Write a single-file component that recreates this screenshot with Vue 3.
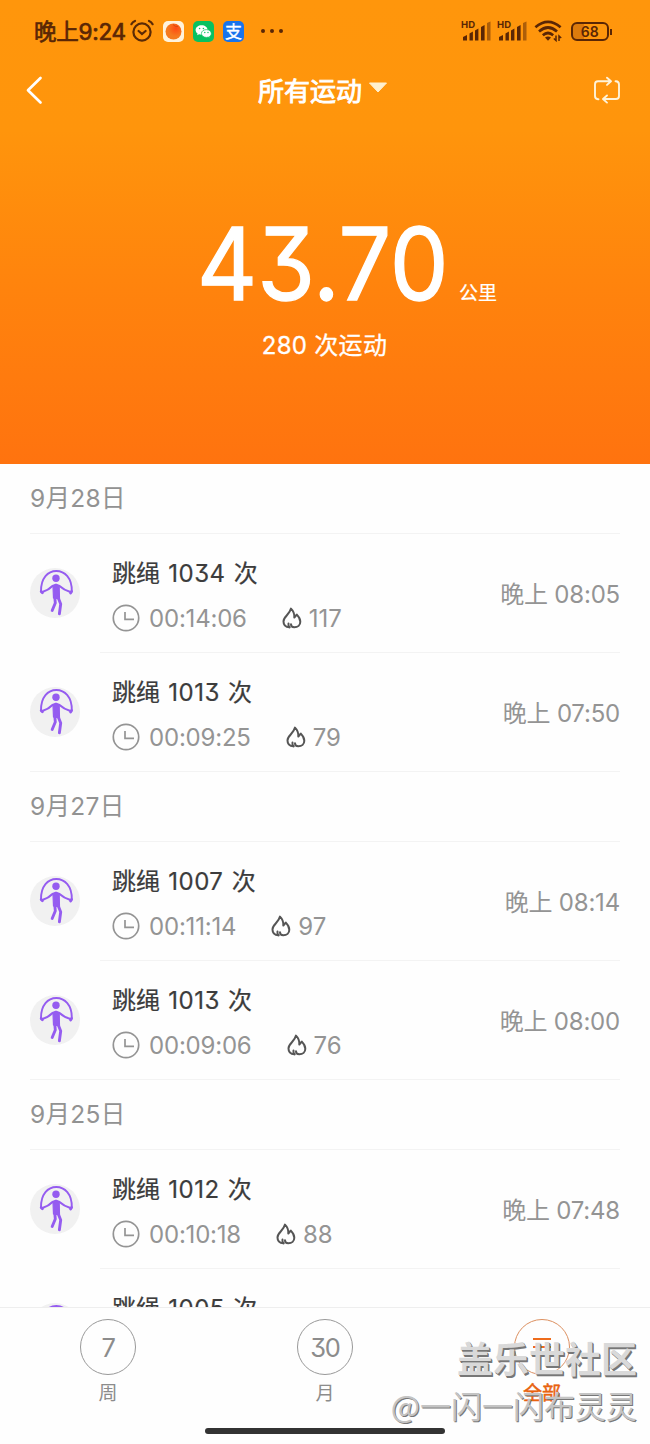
<script setup>
const groups = [
  { date: '9月28日', rows: [
    { n: 1034, t: '00:14:06', c: 117, at: '08:05' },
    { n: 1013, t: '00:09:25', c: 79, at: '07:50' } ] },
  { date: '9月27日', rows: [
    { n: 1007, t: '00:11:14', c: 97, at: '08:14' },
    { n: 1013, t: '00:09:06', c: 76, at: '08:00' } ] },
  { date: '9月25日', rows: [
    { n: 1012, t: '00:10:18', c: 88, at: '07:48' },
    { n: 1005 } ] },
]
</script>

<template>
  <div class="screen">
    <header class="hero">
      <div class="status">
        <span class="clock">晚上9:24</span>
        <svg class="alarm" width="24" height="24" viewBox="0 0 24 24" fill="none" stroke="#5a2a06" stroke-width="2.2" stroke-linecap="round">
          <circle cx="12" cy="13" r="8.6" /><path d="M8.6 12l3.4 3 3.6-3M1.4 5.2Q2.6 3 5 2M22.6 5.2Q21.4 3 19 2" />
        </svg>
        <svg class="app" width="21" height="21" viewBox="0 0 21 21">
          <defs><radialGradient id="ball" cx=".65" cy=".3"><stop offset="0" stop-color="#ff4a12" /><stop offset="1" stop-color="#f57a1e" /></radialGradient></defs>
          <rect width="21" height="21" rx="5" fill="#fff3dc" /><circle cx="10.5" cy="10.5" r="8" fill="url(#ball)" /><path d="M10 3.5q2 2.6 5 2" fill="none" stroke="#d9480c" />
        </svg>
        <svg class="app" width="21" height="21" viewBox="0 0 21 21">
          <rect width="21" height="21" rx="5" fill="#08c160" />
          <path d="M8.6 4.2c-3.400 0-6 2.100-6 4.800 0 1.500.8 2.800 2 3.600l-.5 1.700 2-1c.8.2 1.600.4 2.500.4 3.400 0 6-2 6-4.700s-2.600-4.800-6-4.800z" fill="#fff" />
          <path d="M13.400 8.600c-2.800 0-5 1.700-5 3.900s2.200 3.900 5 3.900c.7 0 1.300-.1 1.900-.3l1.600.8-.4-1.400c1.100-.7 1.800-1.800 1.800-3 0-2.200-2.100-3.900-4.900-3.900z" fill="#fff" stroke="#08c160" stroke-width=".7" />
          <g fill="#08c160"><circle cx="6.600" cy="7.500" r=".8" /><circle cx="10.400" cy="7.500" r=".8" /><circle cx="11.800" cy="11.500" r=".7" /><circle cx="15" cy="11.500" r=".7" /></g>
        </svg>
        <span class="app pay">支</span>
        <span class="dots"><i /><i /><i /></span>
        <span class="grow" />
        <svg v-for="k in 2" :key="k" class="signal" width="31" height="22" viewBox="0 0 31 22">
          <text x="0" y="8" class="hd" textLength="14">HD</text>
          <g fill="#5a2605"><path d="M2 17l4-2v5.500H2zM8.500 13.500l3.400-2v9H8.500zM14 10.500l3.400-2v12H14zM20 7l3.600-2v15.500H20z" /><path d="M26 3l3.500-1.500v19H26z" opacity=".5" /></g>
        </svg>
        <svg class="wifi" width="29" height="22" viewBox="0 0 29 22" fill="none" stroke="#5a2605" stroke-width="2.700">
          <path d="M1.400 7.200Q14 -3.600 26.600 7.200M5 11.400Q14 3.600 23 11.400M8.800 15.200Q14 10.800 19.200 15.200" />
          <path d="M11 17.600Q14 15.400 17 17.600L14 20.800z" fill="#5a2605" stroke="none" />
          <path d="M22 15.500v5l-2.200-2M25 21v-5l2.200 2" stroke-width="1.500" />
        </svg>
        <span class="battery"><span>68</span></span>
      </div>
      <nav class="nav">
        <svg width="18" height="30" viewBox="0 0 18 30" fill="none" stroke="#fff" stroke-width="2.700" stroke-linecap="round" stroke-linejoin="round"><path d="M15.500 3L3 15.300 15.500 27.500" /></svg>
        <div class="title"><span>所有运动</span><svg width="20" height="12" viewBox="0 0 20 12"><path d="M1.500 1h17L10 10z" fill="#fff0cf" stroke="#fff0cf" stroke-linejoin="round" /></svg></div>
        <svg width="28" height="28" viewBox="0 0 28 28" fill="none" stroke="#fff3d8" stroke-width="1.900" stroke-linecap="round" stroke-linejoin="round">
          <path d="M5.500 23.200H5Q2 23 2 20V8.500Q2 5.300 5 5.300H17.500M14 1.700l4 3.600-4 3.600M22.500 5.300H23Q26 5.500 26 8.500V20Q26 23 23 23H10.500M14 19.500L10 23l4 3.600" />
        </svg>
      </nav>
      <div class="total"><span class="num">43.70</span><span class="unit">公里</span></div>
      <div class="count">280 次运动</div>
    </header>

    <main class="list">
      <section v-for="g in groups" :key="g.date">
        <h2 class="date">{{ g.date }}</h2>
        <article v-for="r in g.rows" :key="r.n + (r.t || '')" class="row">
          <span class="avatar">
            <svg width="50" height="50" viewBox="0 0 50 50" fill="none" stroke="#955cf0" stroke-linecap="round" stroke-linejoin="round">
              <path d="M11 23.500C10.800 10 18 3 26.300 3S42.200 10 41.800 23.500" stroke-width="1.900" />
              <path d="M11.200 23.500l1.200 1.200M41.500 23.500l-.9 1.500" stroke-width="2.800" />
              <circle cx="26" cy="10.300" r="3.700" fill="#955cf0" stroke="none" />
              <path d="M13 23.800Q18.500 22 22.500 18L26 16.700 29.500 18Q34 22 39.800 23.800" stroke-width="2.200" />
              <path d="M23 18.500Q26 15.500 29.200 18.500L29.500 31 23.500 30z" fill="#955cf0" stroke-width="1.200" />
              <path d="M24.800 29L25.300 35 22.200 42.500M28.300 30L30.700 36 29.400 45.700" stroke-width="2.900" />
            </svg>
          </span>
          <div class="body">
            <div class="name">跳绳 <span>{{ r.n }}</span> 次</div>
            <div v-if="r.t" class="meta">
              <svg width="28" height="28" viewBox="0 0 28 28" fill="none" stroke="#949494" stroke-width="1.700"><circle cx="14" cy="14" r="12.700" /><path d="M13 8v7.300h9" /></svg>
              <span class="dur">{{ r.t }}</span>
              <svg class="flame" width="20" height="22" viewBox="0 0 20 22" fill="none" stroke="#555" stroke-width="2" stroke-linecap="round" stroke-linejoin="round">
                <path d="M7.500 20.300C3.700 20 1.500 17.600 1.500 14.400 1.500 9.500 7.500 8 9 1.600 11.500 4 12.600 6.800 12.300 10.500L14.800 7.600C17 9.800 18.300 12.200 18.300 14.800 18.300 18.200 15.800 20.300 12.300 20.300 9.800 20.300 9 19 9 17.300" />
                <path d="M7.500 20.300Q6 18.500 6.500 16.500" />
              </svg>
              <span class="cal">{{ r.c }}</span>
            </div>
            <div v-else class="meta" />
          </div>
          <time v-if="r.at" class="at">晚上 {{ r.at }}</time>
        </article>
      </section>
    </main>

    <footer class="tabs">
      <div class="tab"><b>7</b><span>周</span></div>
      <div class="tab"><b>30</b><span>月</span></div>
      <div class="tab on"><b><svg width="20" height="24" viewBox="0 0 20 24" stroke="#ee6c1c" stroke-width="2.200"><path d="M1 3h18M1 11h18M1 19h18" /></svg></b><span>全部</span></div>
    </footer>
    <div class="home" />
    <div class="mark"><div class="m1">盖乐世社区</div><div class="m2">@一闪一闪布灵灵</div></div>
  </div>
</template>

<style>
html, body { margin: 0; background: #fff; overflow: hidden; }
</style>

<style scoped>
.screen { position: relative; width: 650px; height: 1444px; overflow: hidden; display: flex; flex-direction: column; background: #fefefe; font-family: Inter, "Noto Sans CJK SC", sans-serif; font-feature-settings: "cv09"; }
.hero { flex: none; height: 463.500px; background: linear-gradient(#ff960c 0, #ff950c 130px, #ff830d 290px, #ff730f 463px); color: #fff; }
.status { display: flex; align-items: center; height: 62px; padding: 0 41px 0 34px; box-sizing: border-box; color: #5a2605; }
.clock { width: 91px; font-size: 22.500px; line-height: 30px; padding-top: 1px; font-weight: 400; -webkit-text-stroke: .7px #5a2605; letter-spacing: -.25px; white-space: nowrap; }
.alarm { margin: 0 9px 0 5px; }
.app { width: 21px; height: 21px; margin-right: 9px; flex: none; }
.pay { border-radius: 5px; background: #1874ec; color: #fff; font: 400 17px/20px "Noto Sans CJK SC", sans-serif; -webkit-text-stroke: .3px #fff; text-align: center; }
.dots { display: flex; gap: 5.500px; margin-left: 8px; }
.dots i { width: 3.500px; height: 3.500px; border-radius: 2px; background: #5a2605; }
.grow { flex: 1; }
.signal { margin-right: 5.500px; }
.hd { font: 700 9.500px Inter, sans-serif; fill: #5a2605; }
.wifi { margin: 0 8px 0 0; }
.battery { position: relative; box-sizing: border-box; width: 38.500px; height: 19px; border: 2px solid #5a2605; border-radius: 6px; background: linear-gradient(90deg, #dc7b0d 11px, transparent 11px); font-size: 14px; line-height: 15px; font-weight: 600; text-align: center; }
.battery::after { content: ""; position: absolute; right: -5px; top: 5px; width: 2px; height: 6px; background: #5a2605; }
.nav { display: flex; align-items: center; justify-content: space-between; height: 56px; padding: 0 29px 0 25px; }
.title { display: flex; align-items: center; gap: 6px; margin: 4px 0 0 10px; font-size: 26px; line-height: 36px; font-weight: 400; -webkit-text-stroke: .9px #fff; }
.title svg { margin-top: -8px; }
.total { display: flex; align-items: flex-end; justify-content: flex-start; height: 112px; margin: 90px 0 0 197px; }
.num { width: 251px; font-size: 100.500px; line-height: 112px; font-weight: 400; -webkit-text-stroke: 1.300px #fff; transform: scaleX(.928); transform-origin: 0 50%; white-space: nowrap; }
.unit { margin-left: 11px; font-size: 19px; line-height: 26px; margin-bottom: 13px; font-weight: 400; -webkit-text-stroke: .2px #fff; }
.count { margin: 8px 1px 0 0; text-align: center; font-size: 24px; line-height: 36px; letter-spacing: .3px; -webkit-text-stroke: .3px #fff; }
.list { flex: 1; overflow: hidden; }
.date { margin: 0 30px; height: 70.500px; box-sizing: border-box; border-bottom: 1px solid #f3f3f3; font-size: 24.500px; line-height: 69px; font-weight: 400; color: #929292; letter-spacing: .3px; }
.row { display: flex; align-items: center; position: relative; height: 118.750px; margin: 0 30px; }
.row::after { content: ""; position: absolute; left: 70px; right: 0; bottom: 0; height: 1px; background: #f3f3f3; }
.row:last-child::after { left: 0; }
.avatar { width: 50px; height: 50px; border-radius: 50%; background: #f1f1f1; }
.body { flex: 1; margin-left: 32px; padding-top: 5px; }
.name { font-size: 24px; line-height: 36px; color: #3c3c3c; margin-bottom: 9px; white-space: nowrap; word-spacing: 1.500px; -webkit-text-stroke: .2px #3c3c3c; }
.name span { letter-spacing: .5px; }
.meta { display: flex; align-items: center; height: 34px; color: #949494; font-size: 24px; }
.dur { margin: 0 35px 0 9px; letter-spacing: -.2px; }
.flame { margin-right: 7px; }
.cal { letter-spacing: -.1px; }
.at { font-size: 24px; color: #949494; letter-spacing: -.2px; padding-bottom: 2px; }
.tabs { flex: none; display: flex; justify-content: space-between; height: 137px; padding: 11px 80px 0; box-sizing: border-box; border-top: 1px solid #eee; background: #fefefe; }
.tab { display: flex; flex-direction: column; align-items: center; width: 56px; color: #8c8c8c; font-size: 19px; line-height: 26px; }
.tab b { display: flex; align-items: center; justify-content: center; width: 56px; height: 56px; box-sizing: border-box; padding-top: 2px; border: 1px solid #999; border-radius: 50%; font-size: 25.500px; letter-spacing: -1.300px; font-weight: 400; margin-bottom: 6px; }
.tab.on { color: #e8630f; -webkit-text-stroke: .5px #e8630f; }
.tab.on b { border-color: #dc9060; }
.home { position: absolute; left: 205px; bottom: 10px; width: 240px; height: 6px; border-radius: 3px; background: #333; }
.mark { position: absolute; right: 13px; bottom: 16px; text-align: right; white-space: nowrap; font-family: "Noto Sans CJK SC", sans-serif; }
.m1 { font-size: 36px; line-height: 50px; font-weight: 700; color: #d9d9d9; text-shadow: 1px 1px 0 #777, 1.500px 1.500px 0 #777; }
.m2 { font-size: 31px; line-height: 46px; color: #c4c4c4; text-shadow: 1px 1px 0 #777; }
</style>
